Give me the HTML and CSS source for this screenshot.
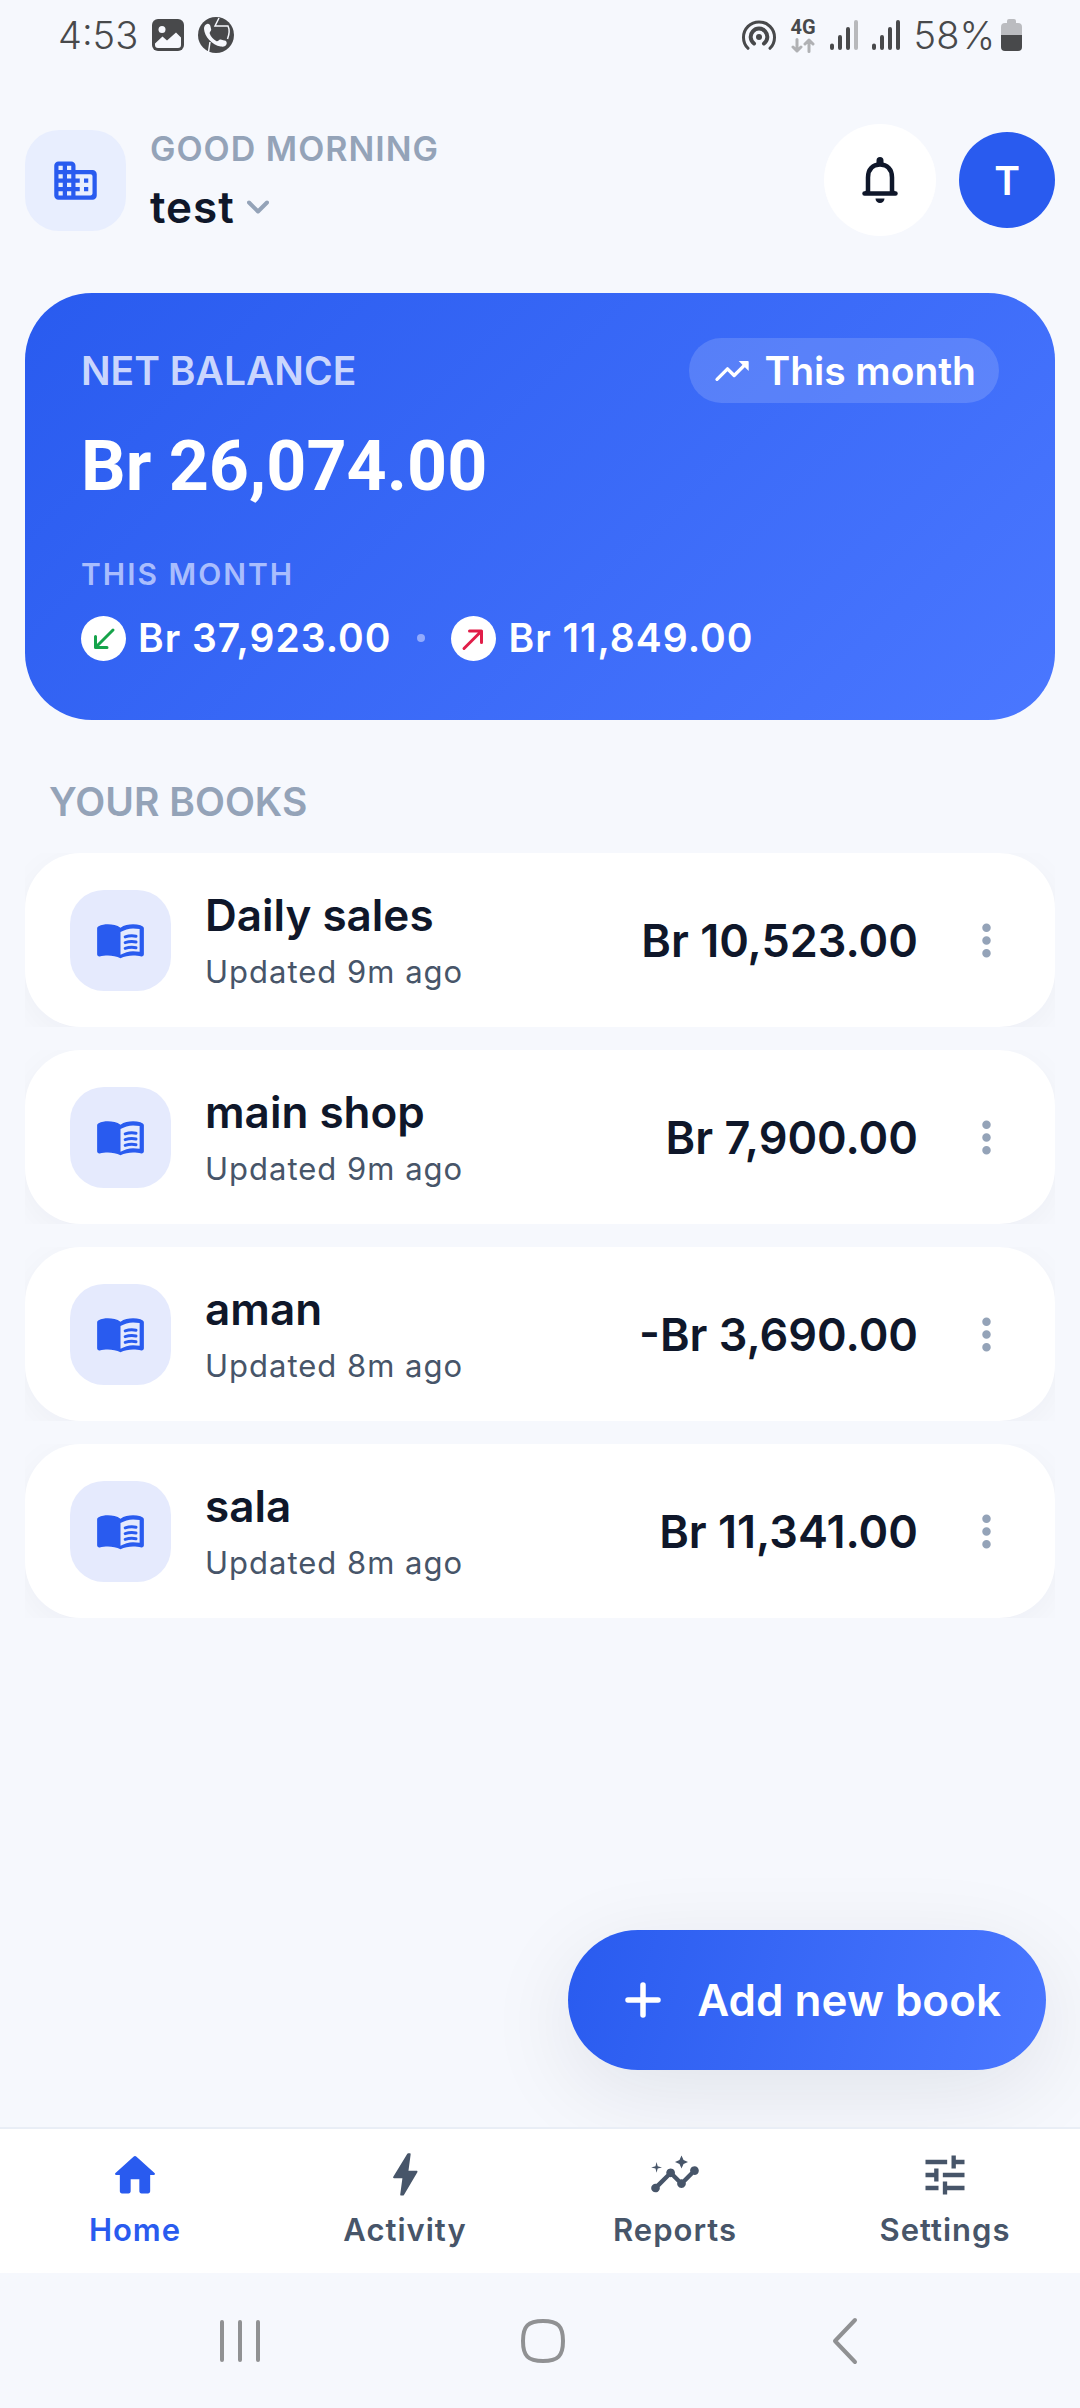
FILE: index.html
```html
<!DOCTYPE html>
<html lang="en">
<head>
  <meta charset="UTF-8">
  <meta name="viewport" content="width=device-width, initial-scale=1.0">
  <title>Books</title>
  <link rel="stylesheet" href="styles.css">
</head>
<body>
  <svg class="sprite" aria-hidden="true">
    <symbol id="icon-book" viewBox="0 0 24 24">
      <path fill="currentColor" fill-rule="evenodd" d="M21.4 4.8C20.3 4.5 19.100 4.400 17.9 4.400c-2 0-4.300.400-5.900 1.600-1.600-1.200-3.900-1.600-5.900-1.600-1.500 0-3.100.200-4.400.900-.5.200-.7.600-.7 1.100v12.100c0 .7.600 1.100 1.200 1 1.200-.4 2.600-.5 3.900-.5 1.900 0 4.200.400 5.900 1.300 1.700-.9 4-1.300 5.900-1.300 1.300 0 2.700.100 3.900.500.600.100 1.200-.300 1.200-1V6.400c0-.5-.200-.9-.700-1.100zM21 17.300c-1-.2-2.100-.3-3.100-.3-1.900 0-4.300.700-5.900 1.700V8c1.600-1 4-1.700 5.900-1.700 1 0 2.100.100 3.100.300z"/>
      <path fill="none" stroke="currentColor" stroke-width="1.4" stroke-linecap="round" d="M14.200 10.300c1.600-.5 3.500-.6 5.100-.3M14.200 13c1.600-.5 3.500-.6 5.100-.3M14.200 15.700c1.600-.5 3.500-.6 5.100-.3"/>
    </symbol>
    <symbol id="icon-more" viewBox="0 0 24 24">
      <path fill="currentColor" d="M12 8c1.100 0 2-.9 2-2s-.9-2-2-2-2 .9-2 2 .9 2 2 2zm0 2c-1.100 0-2 .9-2 2s.9 2 2 2 2-.9 2-2-.9-2-2-2zm0 6c-1.100 0-2 .9-2 2s.9 2 2 2 2-.9 2-2-.9-2-2-2z"/>
    </symbol>
  </svg>

  <div class="status-bar">
    <div class="status-left">
      <span>4:53</span>
      <svg width="32" height="32" viewBox="0 0 32 32" aria-hidden="true">
        <rect x="0" y="0" width="32" height="32" rx="6" fill="#48494b"/>
        <circle cx="10" cy="10.500" r="3.500" fill="#f6f8fd"/>
        <path fill="#f6f8fd" d="M3 24.500l7.500-7 4.500 4L24 13.500l5 5V26a3 3 0 0 1-3 3H6a3 3 0 0 1-3-3z"/>
      </svg>
      <svg width="36" height="36" viewBox="0 0 36 36" aria-hidden="true">
        <circle cx="18" cy="18" r="18" fill="#48494b"/>
        <path fill="none" stroke="#f6f8fd" stroke-width="1.500" d="M21 1l-4 8h13c2 4 1 9-.5 13M10.500 35l1.500-10"/>
        <path fill="#f6f8fd" d="M8 7.500c2-1.500 4-.5 4.500 2l.7 3c.2 1.500-2 2.500-1.500 4 1 3 3.500 6 6.500 7.500 2 1 2.500-2 4.500-1.500l3.500 1c1.500-.5 2.800 1 2.500 3-.5 3-3.500 3.500-6 3C14 28 6.500 19.500 6 12c0-2 .5-3.500 2-4.500z"/>
      </svg>
    </div>
    <div class="status-right">
      <svg width="36" height="32" viewBox="0 0 36 32" aria-hidden="true">
        <g fill="none" stroke="#48494b" stroke-linecap="round">
          <path stroke-width="3" d="M7 29.300A15.500 15.500 0 1 1 29 29.300"/>
          <path stroke-width="4" d="M13 24.500a8.300 8.300 0 1 1 10 0"/>
        </g>
        <circle cx="18" cy="18" r="3" fill="#48494b"/>
      </svg>
      <div class="network">
        <span>4G</span>
        <svg width="24" height="15" viewBox="0 0 24 15" aria-hidden="true">
          <path fill="none" stroke="#b0b1b4" stroke-width="3" stroke-linecap="round" stroke-linejoin="round" d="M6 1.500v11.500M2 9l4 4 4-4M18 13.500V2M14 6l4-4 4 4"/>
        </svg>
      </div>
      <svg width="28" height="30" viewBox="0 0 28 30" aria-hidden="true">
        <path stroke="#48494b" stroke-width="4" stroke-linecap="round" d="M2 25.500v2.500M10 17v11M18 9v19"/>
        <path stroke="#b8b9bc" stroke-width="4" stroke-linecap="round" d="M26 2v26"/>
      </svg>
      <svg width="28" height="30" viewBox="0 0 28 30" aria-hidden="true">
        <path stroke="#48494b" stroke-width="4" stroke-linecap="round" d="M2 25.500v2.500M10 17v11M18 9v19M26 2v26"/>
      </svg>
      <div class="battery">
        <span>58%</span>
        <svg width="21" height="32" viewBox="0 0 21 32" aria-hidden="true">
          <path fill="#bbbcc0" d="M6 2a2 2 0 0 1 2-2h5a2 2 0 0 1 2 2v2h2a4 4 0 0 1 4 4v9H0V8a4 4 0 0 1 4-4h2z"/>
          <path fill="#48494b" d="M0 16h21v12a4 4 0 0 1-4 4H4a4 4 0 0 1-4-4z"/>
        </svg>
      </div>
    </div>
  </div>

  <header class="header">
    <div class="tile tile-header">
      <svg width="51" height="51" viewBox="0 0 24 24" aria-hidden="true">
        <path fill="currentColor" fill-rule="evenodd" d="M12 7V5c0-1.100-.9-2-2-2H4c-1.100 0-2 .9-2 2v14c0 1.100.9 2 2 2h16c1.100 0 2-.9 2-2V9c0-1.100-.9-2-2-2zM6 19H4v-2h2zm0-4H4v-2h2zm0-4H4V9h2zm0-4H4V5h2zm4 12H8v-2h2zm0-4H8v-2h2zm0-4H8V9h2zm0-4H8V5h2zm9 12h-7v-2h2v-2h-2v-2h2v-2h-2V9h7c.6 0 1 .4 1 1v8c0 .6-.4 1-1 1zm-1-8h-2v2h2zm0 4h-2v2h2z"/>
      </svg>
    </div>
    <div class="greeting">
      <p class="greeting-label">GOOD MORNING</p>
      <button class="account" type="button">test
        <svg width="22" height="14" viewBox="0 0 22 14" aria-hidden="true">
          <path fill="none" stroke="#94a3b8" stroke-width="4" stroke-linecap="round" stroke-linejoin="round" d="M2 2.500l9 9 9-9"/>
        </svg>
      </button>
    </div>
    <button class="bell" type="button" aria-label="Notifications">
      <svg width="36" height="46" viewBox="0 0 36 46" aria-hidden="true">
        <path fill="none" stroke="currentColor" stroke-width="4.500" stroke-linecap="round" stroke-linejoin="round" d="M6 36V20.500C6 12 11 7.500 18 7.500S30 12 30 20.500V36M2.500 36.500h31"/>
        <path fill="currentColor" d="M14.500 3.500a3.500 3.500 0 0 1 7 0v5h-7zM7 31l-6.500 5.500H7zM29 31l6.500 5.500H29zM13.500 41.500h9a4.500 4.500 0 0 1-9 0z"/>
      </svg>
    </button>
    <button class="avatar" type="button">T</button>
  </header>

  <main class="main">
    <section class="balance">
      <div class="balance-top">
        <h2 class="balance-label">NET BALANCE</h2>
        <button class="period" type="button">
          <svg width="40" height="40" viewBox="0 0 24 24" aria-hidden="true">
            <path fill="none" stroke="currentColor" stroke-width="2" stroke-linecap="round" stroke-linejoin="round" d="M3 17l6.300-6.300 4 4L20 8"/>
            <path fill="currentColor" d="M16 6h5.500c.3 0 .5.200.5.500V12z"/>
          </svg>
          This month
        </button>
      </div>
      <p class="balance-amount">Br 26,074.00</p>
      <p class="month-label">THIS MONTH</p>
      <div class="flows">
        <span class="flow">
          <svg width="45" height="45" viewBox="0 0 45 45" aria-hidden="true">
            <circle cx="22.500" cy="22.500" r="22.500" fill="#fff"/>
            <path fill="none" stroke="#16a34a" stroke-width="3" stroke-linecap="round" stroke-linejoin="round" d="M32 14L14.500 31.500M14.500 20.500v11h11.500"/>
          </svg>
          Br 37,923.00
        </span>
        <span class="dot"></span>
        <span class="flow">
          <svg width="45" height="45" viewBox="0 0 45 45" aria-hidden="true">
            <circle cx="22.500" cy="22.500" r="22.500" fill="#fff"/>
            <path fill="none" stroke="#e11d48" stroke-width="3" stroke-linecap="round" stroke-linejoin="round" d="M13 32.500L30.500 15M18.500 15h12v11.500"/>
          </svg>
          Br 11,849.00
        </span>
      </div>
    </section>

    <h2 class="section-title">YOUR BOOKS</h2>
    <ul class="books">
      <li>
        <div class="book">
          <div class="tile"><svg width="51" height="51" aria-hidden="true"><use href="#icon-book"/></svg></div>
          <div class="book-info">
            <h3>Daily sales</h3>
            <p>Updated 9m ago</p>
          </div>
          <span class="book-amount">Br 10,523.00</span>
          <button class="more" type="button" aria-label="Options for Daily sales"><svg width="51" height="51" aria-hidden="true"><use href="#icon-more"/></svg></button>
        </div>
      </li>
      <li>
        <div class="book">
          <div class="tile"><svg width="51" height="51" aria-hidden="true"><use href="#icon-book"/></svg></div>
          <div class="book-info">
            <h3>main shop</h3>
            <p>Updated 9m ago</p>
          </div>
          <span class="book-amount">Br 7,900.00</span>
          <button class="more" type="button" aria-label="Options for main shop"><svg width="51" height="51" aria-hidden="true"><use href="#icon-more"/></svg></button>
        </div>
      </li>
      <li>
        <div class="book">
          <div class="tile"><svg width="51" height="51" aria-hidden="true"><use href="#icon-book"/></svg></div>
          <div class="book-info">
            <h3>aman</h3>
            <p>Updated 8m ago</p>
          </div>
          <span class="book-amount">-Br 3,690.00</span>
          <button class="more" type="button" aria-label="Options for aman"><svg width="51" height="51" aria-hidden="true"><use href="#icon-more"/></svg></button>
        </div>
      </li>
      <li>
        <div class="book">
          <div class="tile"><svg width="51" height="51" aria-hidden="true"><use href="#icon-book"/></svg></div>
          <div class="book-info">
            <h3>sala</h3>
            <p>Updated 8m ago</p>
          </div>
          <span class="book-amount">Br 11,341.00</span>
          <button class="more" type="button" aria-label="Options for sala"><svg width="51" height="51" aria-hidden="true"><use href="#icon-more"/></svg></button>
        </div>
      </li>
    </ul>

    <button class="add-book" type="button">
      <svg width="36" height="36" viewBox="0 0 36 36" aria-hidden="true">
        <path stroke="currentColor" stroke-width="5.500" stroke-linecap="round" d="M18 3v30M3 18h30"/>
      </svg>
      Add new book
    </button>
  </main>

  <nav class="tabs">
    <a class="tab active" href="#home">
      <svg width="52" height="52" viewBox="0 0 24 24" aria-hidden="true">
        <path fill="currentColor" d="M10 19.500V14h4v5.500c0 .5.400 1 1 1h3c.6 0 1-.5 1-1V12h1.700c.5 0 .7-.6.300-.9L12.700 3.600a1 1 0 0 0-1.400 0L3 11.100c-.4.300-.2.900.3.900H5v7.500c0 .5.400 1 1 1h3c.6 0 1-.5 1-1z"/>
      </svg>
      Home
    </a>
    <a class="tab" href="#activity">
      <svg width="52" height="52" viewBox="0 0 24 24" aria-hidden="true">
        <path fill="currentColor" d="M11 21.500h-.8c-.3 0-.4-.2-.4-.5l1-7.500H7c-.5 0-.6-.4-.4-.7L13 2.300c.1-.2.300-.3.500-.3h.7c.3 0 .4.200.4.500L13.600 10h3.700c.4 0 .6.300.4.700l-6.200 10.500c-.1.200-.3.300-.5.300z"/>
      </svg>
      Activity
    </a>
    <a class="tab" href="#reports">
      <svg width="52" height="52" viewBox="0 0 24 24" aria-hidden="true">
        <path fill="currentColor" d="M21 8c-1.450 0-2.260 1.440-1.930 2.510l-3.550 3.560c-.3-.09-.74-.09-1.040 0l-2.550-2.550C12.270 10.450 11.460 9 10 9c-1.450 0-2.270 1.440-1.930 2.520l-4.560 4.550C2.440 15.740 1 16.550 1 18c0 1.100.9 2 2 2 1.450 0 2.260-1.440 1.930-2.510l4.550-4.560c.3.090.74.090 1.040 0l2.550 2.550C12.730 16.550 13.540 18 15 18c1.450 0 2.270-1.440 1.930-2.520l3.560-3.550C21.560 12.260 23 11.450 23 10c0-1.100-.9-2-2-2z"/>
        <path fill="currentColor" d="M15 9l.94-2.070L18 6l-2.060-.93L15 3l-.92 2.070L12 6l2.080.93zM3.500 11L4 9l2-.5L4 8l-.5-2L3 8l-2 .5L3 9z"/>
      </svg>
      Reports
    </a>
    <a class="tab" href="#settings">
      <svg width="52" height="52" viewBox="0 0 24 24" aria-hidden="true">
        <path fill="currentColor" d="M3 17v2h6v-2H3zM3 5v2h10V5H3zm10 16v-2h8v-2h-8v-2h-2v6h2zM7 9v2H3v2h4v2h2V9H7zm14 4v-2H11v2h10zm-6-4h2V7h4V5h-4V3h-2v6z"/>
      </svg>
      Settings
    </a>
  </nav>

  <div class="system-nav">
    <button type="button" aria-label="Recent apps">
      <svg width="48" height="48" viewBox="0 0 48 48" aria-hidden="true">
        <path stroke="#909193" stroke-width="4" stroke-linecap="round" d="M6 5v38M24 5v38M42 5v38"/>
      </svg>
    </button>
    <button type="button" aria-label="Home screen">
      <svg width="48" height="48" viewBox="0 0 48 48" aria-hidden="true">
        <path fill="none" stroke="#909193" stroke-width="4" d="M24 4c-15 0-20 5-20 20s5 20 20 20 20-5 20-20S39 4 24 4z"/>
      </svg>
    </button>
    <button type="button" aria-label="Back">
      <svg width="48" height="48" viewBox="0 0 48 48" aria-hidden="true">
        <path fill="none" stroke="#909193" stroke-width="4" stroke-linecap="round" stroke-linejoin="round" d="M34 3L14 24l20 21"/>
      </svg>
    </button>
  </div>
</body>
</html>
```
FILE: styles.css
```css
* {
  box-sizing: border-box;
  margin: 0;
  padding: 0;
}
body {
  display: flex;
  flex-direction: column;
  min-height: 100vh;
  background: #f6f8fd;
  color: #0f172a;
  font-family: Inter, "Liberation Sans", sans-serif;
}
button {
  border: none;
  background: none;
  color: inherit;
  font: inherit;
  letter-spacing: inherit;
  cursor: pointer;
}
svg {
  display: block;
  flex-shrink: 0;
}
.sprite {
  position: absolute;
  width: 0;
  height: 0;
}

/* status bar */
.status-bar {
  display: flex;
  justify-content: space-between;
  align-items: center;
  height: 70px;
  padding: 0 58px;
  font-size: 38px;
  font-weight: 300;
  color: #48494b;
}
.status-left,
.status-right,
.battery {
  display: flex;
  align-items: center;
}
.status-left,
.status-right {
  gap: 14px;
}
.battery {
  gap: 6px;
}
.network {
  display: flex;
  flex-direction: column;
  align-items: center;
  gap: 2px;
  font-family: Roboto, sans-serif;
  font-size: 20px;
  font-weight: 700;
  line-height: 18px;
}

/* header */
.header {
  display: flex;
  align-items: center;
  padding: 51px 25px 54px;
}
.tile {
  display: flex;
  align-items: center;
  justify-content: center;
  flex-shrink: 0;
  width: 101px;
  height: 101px;
  border-radius: 34px;
  background: #e5eafd;
  color: #295bef;
}
.tile-header {
  background: #e8eefe;
}
.greeting {
  flex: 1;
  padding: 4px 0 0 24px;
}
.greeting-label {
  margin-bottom: 2px;
  font-size: 34px;
  font-weight: 600;
  line-height: 48px;
  letter-spacing: 1px;
  color: #94a3b8;
}
.account {
  display: flex;
  align-items: center;
  gap: 12px;
  font-size: 44px;
  font-weight: 600;
  line-height: 64px;
  letter-spacing: 1px;
}
.bell,
.avatar {
  display: flex;
  align-items: center;
  justify-content: center;
  border-radius: 50%;
}
.bell {
  width: 112px;
  height: 112px;
  margin-right: 23px;
  background: #fff;
}
.avatar {
  width: 96px;
  height: 96px;
  background: #295bef;
  color: #fff;
  font-size: 39px;
  font-weight: 600;
}

/* balance card */
.main {
  position: relative;
  flex: 1;
  padding: 0 25px 57px;
}
.balance {
  padding: 45px 56px 56px;
  border-radius: 67px;
  background: linear-gradient(135deg, #295bef, #4a77ff);
  color: #fff;
}
.balance-top {
  display: flex;
  align-items: center;
  justify-content: space-between;
}
.balance-label {
  font-size: 39px;
  font-weight: 600;
  color: #cad6fd;
}
.period {
  display: flex;
  align-items: center;
  gap: 12px;
  height: 65px;
  padding: 0 23px;
  border-radius: 33px;
  background: rgba(255, 255, 255, 0.15);
  font-size: 39px;
  font-weight: 600;
}
.balance-amount {
  margin-top: 21px;
  font-family: Roboto, sans-serif;
  font-size: 70px;
  font-weight: 700;
  line-height: 84px;
}
.month-label {
  margin-top: 44px;
  font-size: 30px;
  font-weight: 600;
  line-height: 44px;
  letter-spacing: 2px;
  color: #a9bdfd;
}
.flows,
.flow {
  display: flex;
  align-items: center;
}
.flows {
  gap: 26px;
  margin-top: 16px;
}
.flow {
  gap: 12px;
  font-size: 39px;
  font-weight: 600;
  line-height: 52px;
  letter-spacing: 1px;
}
.dot {
  width: 8px;
  height: 8px;
  border-radius: 50%;
  background: #92abfd;
}

/* books list */
.section-title {
  padding: 56px 24px 25px;
  font-size: 39px;
  font-weight: 600;
  line-height: 52px;
  color: #94a3b8;
}
.books {
  display: flex;
  flex-direction: column;
  gap: 23px;
  list-style: none;
}
/* the shadow only shows inside the row's corners */
.books li {
  overflow: hidden;
}
.book {
  display: flex;
  align-items: center;
  height: 174px;
  padding: 0 43px 0 45px;
  border-radius: 56px;
  background: #fff;
  box-shadow: 0 8px 34px rgba(15, 23, 42, 0.04);
}
.book-info {
  flex: 1;
  padding-left: 34px;
}
.book-info h3 {
  font-size: 44px;
  font-weight: 600;
  line-height: 64px;
}
.book-info p {
  font-size: 31px;
  line-height: 50px;
  letter-spacing: 1px;
  color: #475569;
}
.book-amount {
  font-size: 45px;
  font-weight: 600;
}
.more {
  margin-left: 43px;
  color: #94a3b8;
}

/* floating button */
.add-book {
  position: absolute;
  right: 34px;
  bottom: 57px;
  display: flex;
  align-items: center;
  gap: 36px;
  height: 140px;
  padding: 0 45px 0 57px;
  border-radius: 70px;
  background: linear-gradient(105deg, #295bef, #4a77ff);
  box-shadow: 0 22px 90px rgba(15, 23, 42, 0.09);
  color: #fff;
  font-size: 44px;
  font-weight: 600;
}

/* bottom tabs */
.tabs {
  position: relative;
  display: flex;
  height: 146px;
  padding-top: 20px;
  border-top: 2px solid #e9eef6;
  background: #fff;
}
.tab {
  display: flex;
  flex: 1;
  flex-direction: column;
  align-items: center;
  gap: 7px;
  color: #475569;
  font-size: 31px;
  font-weight: 600;
  line-height: 44px;
  letter-spacing: 1px;
  text-decoration: none;
}
.tab.active {
  color: #295bef;
}

/* system navigation */
.system-nav {
  display: flex;
  align-items: center;
  justify-content: space-between;
  height: 135px;
  padding: 0 211px 0 216px;
}
```
